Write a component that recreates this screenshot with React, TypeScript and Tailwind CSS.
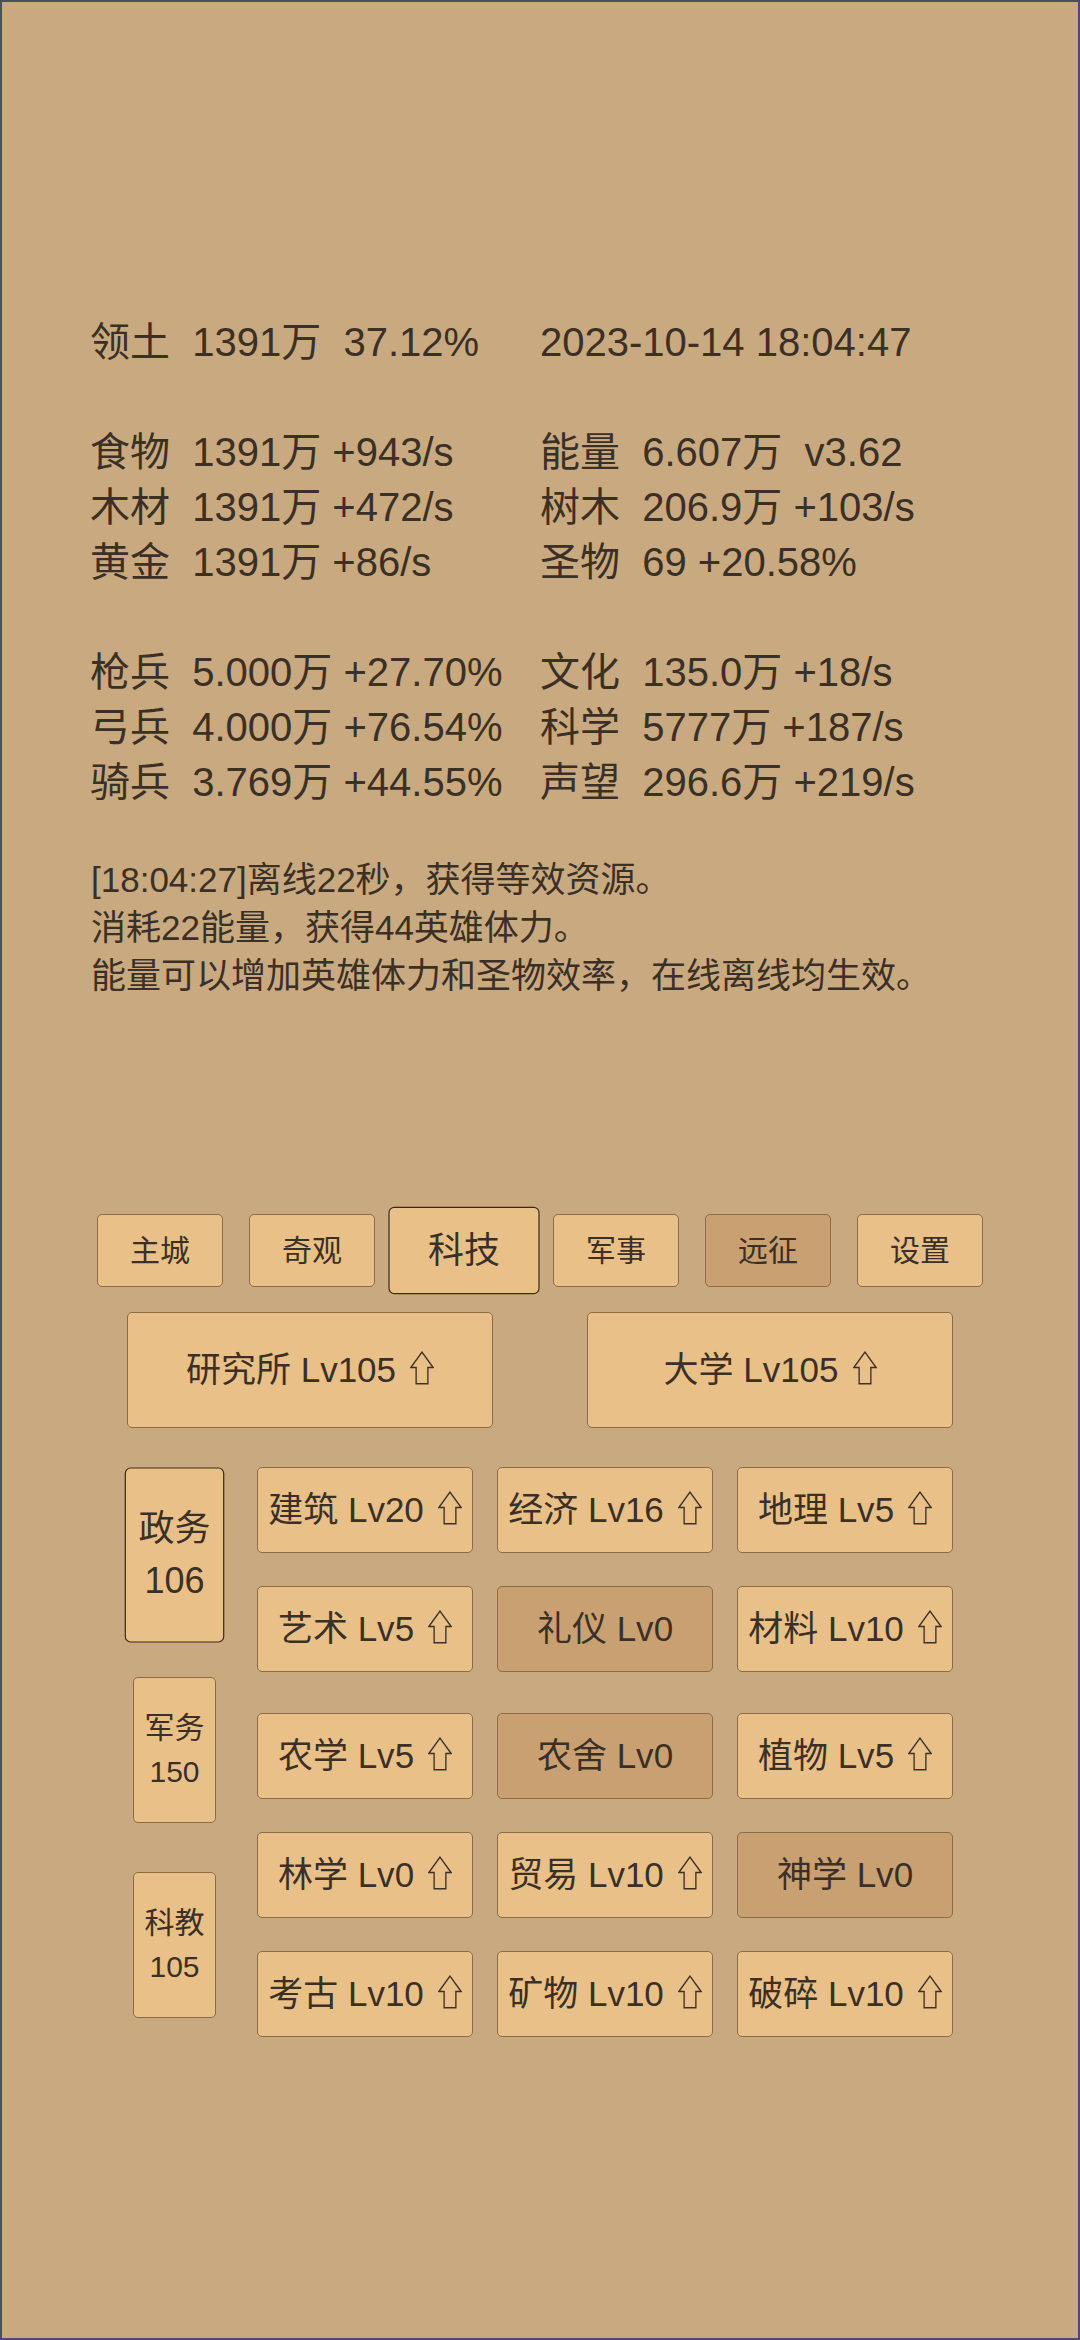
import React from 'react';

const FONT = '"Liberation Sans", "Noto Sans CJK SC", sans-serif';

const statRows: [string, string][] = [
  ['领土  1391万  37.12%', '2023-10-14 18:04:47'],
  ['', ''],
  ['食物  1391万 +943/s', '能量  6.607万  v3.62'],
  ['木材  1391万 +472/s', '树木  206.9万 +103/s'],
  ['黄金  1391万 +86/s', '圣物  69 +20.58%'],
  ['', ''],
  ['枪兵  5.000万 +27.70%', '文化  135.0万 +18/s'],
  ['弓兵  4.000万 +76.54%', '科学  5777万 +187/s'],
  ['骑兵  3.769万 +44.55%', '声望  296.6万 +219/s'],
];

const logLines = [
  '[18:04:27]离线22秒，获得等效资源。',
  '消耗22能量，获得44英雄体力。',
  '能量可以增加英雄体力和圣物效率，在线离线均生效。',
];

const tabs = [
  { name: '主城' },
  { name: '奇观' },
  { name: '科技', active: true },
  { name: '军事' },
  { name: '远征', locked: true },
  { name: '设置' },
];

type Tech = { name: string; lv: number; up: boolean };

const techRows: Tech[][] = [
  [
    { name: '建筑', lv: 20, up: true },
    { name: '经济', lv: 16, up: true },
    { name: '地理', lv: 5, up: true },
  ],
  [
    { name: '艺术', lv: 5, up: true },
    { name: '礼仪', lv: 0, up: false },
    { name: '材料', lv: 10, up: true },
  ],
  [
    { name: '农学', lv: 5, up: true },
    { name: '农舍', lv: 0, up: false },
    { name: '植物', lv: 5, up: true },
  ],
  [
    { name: '林学', lv: 0, up: true },
    { name: '贸易', lv: 10, up: true },
    { name: '神学', lv: 0, up: false },
  ],
  [
    { name: '考古', lv: 10, up: true },
    { name: '矿物', lv: 10, up: true },
    { name: '破碎', lv: 10, up: true },
  ],
];

const branches = [
  { name: '政务', pts: 106, active: true },
  { name: '军务', pts: 150 },
  { name: '科教', pts: 105 },
];

function UpArrow() {
  return (
    <svg width="24" height="34" viewBox="0 0 23 33" className="ml-[14px] -mt-[4px] inline-block align-middle" aria-label="升级">
      <path
        d="M11.5 1 L22.3 16 L17.2 16 L17.2 31.8 L5.8 31.8 L5.8 16 L0.7 16 Z"
        fill="none"
        stroke="#3b3026"
        strokeWidth="1.3"
        strokeLinejoin="miter"
      />
    </svg>
  );
}

function TechButton({ t }: { t: Tech }) {
  return (
    <button
      className={
        'flex h-[86px] w-[216px] items-center justify-center whitespace-nowrap rounded-[5px] border-[1.5px] border-[#8c6b45] text-[35px] text-[#3b3026] ' +
        (t.up ? 'bg-[#e9c088]' : 'bg-[#c9a071]')
      }
    >
      <span>
        {t.name} Lv{t.lv}
      </span>
      {t.up && <UpArrow />}
    </button>
  );
}

export default function App() {
  return (
    <div
      className="h-[2340px] w-[1080px] overflow-hidden border-2 border-[#4a4d68] bg-[#c9a97f] text-[#3b3026]"
      style={{ fontFamily: FONT }}
    >
      {/* resource stats */}
      <div className="pl-[88px] pt-[313px] text-[40px] leading-[55px]">
        {statRows.map(([a, b], i) => (
          <div key={i} className="flex h-[55px] whitespace-pre">
            <div className="w-[450px]">{a}</div>
            <div>{b}</div>
          </div>
        ))}
      </div>

      {/* log */}
      <div className="mt-[46px] pl-[89px] text-[35px] leading-[48px]">
        {logLines.map((l, i) => (
          <div key={i}>{l}</div>
        ))}
      </div>

      {/* tabs */}
      <div className="mt-[214px] flex justify-center gap-[26px]">
        {tabs.map((t) => (
          <button
            key={t.name}
            className={
              'flex h-[73px] w-[126px] items-center justify-center rounded-[5px] border-[1.5px] text-[30px] ' +
              (t.active
                ? 'scale-120 border-[#3a2818] bg-[#e9c088]'
                : t.locked
                  ? 'border-[#8c6b45] bg-[#c9a071]'
                  : 'border-[#8c6b45] bg-[#e9c088]')
            }
          >
            {t.name}
          </button>
        ))}
      </div>

      {/* buildings */}
      <div className="mt-[25px] flex justify-center gap-[94px]">
        {['研究所 Lv105', '大学 Lv105'].map((b) => (
          <button
            key={b}
            className="flex h-[116px] w-[366px] items-center justify-center rounded-[5px] border-[1.5px] border-[#8c6b45] bg-[#e9c088] text-[35px]"
          >
            <span>{b}</span>
            <UpArrow />
          </button>
        ))}
      </div>

      {/* tech tree */}
      <div className="mt-[39px] flex pl-[131px]">
        <div className="mt-[15px] flex w-[83px] flex-col gap-[49px]">
          {branches.map((b) => (
            <button
              key={b.name}
              className={
                'flex h-[146px] w-[83px] flex-col items-center justify-center rounded-[5px] border-[1.5px] bg-[#e9c088] text-[30px] leading-[44px] ' +
                (b.active ? 'scale-120 border-[#3a2818]' : 'border-[#8c6b45]')
              }
            >
              <span>{b.name}</span>
              <span>{b.pts}</span>
            </button>
          ))}
        </div>
        <div className="ml-[41px] flex flex-col">
          {techRows.map((row, i) => (
            <div key={i} className={'flex gap-[24px] ' + (i === 0 ? '' : i === 2 ? 'mt-[41px]' : 'mt-[33px]')}>
              {row.map((t) => (
                <TechButton key={t.name} t={t} />
              ))}
            </div>
          ))}
        </div>
      </div>
    </div>
  );
}
